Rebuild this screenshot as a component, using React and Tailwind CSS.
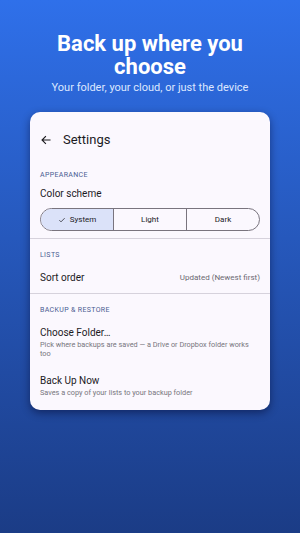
const Label = ({ children, className = "" }) => (
  <div
    className={`px-[10px] text-[7px] leading-[10px] tracking-[0.35px] text-[#4a5c92] ${className}`}
  >
    {children}
  </div>
);

const Divider = ({ className = "" }) => (
  <div className={`h-px bg-[#d6d2dc] ${className}`}></div>
);

const ArrowLeft = () => (
  <svg width="12" height="12" viewBox="0 0 24 24" fill="none">
    <path
      d="M20 12H5M11 5l-7 7 7 7"
      stroke="#1c1b1f"
      strokeWidth="2.2"
      strokeLinecap="square"
    />
  </svg>
);

const Check = () => (
  <svg width="8" height="8" viewBox="0 0 24 24" fill="none">
    <path d="M4 12.5l5 5L20 6.5" stroke="#1c1b1f" strokeWidth="2.2" />
  </svg>
);

export default function App() {
  const options = ["System", "Light", "Dark"];

  return (
    <div
      className="w-[300px] h-[533px] flex flex-col items-center bg-gradient-to-b from-[#2f70ea] to-[#1b3c86] overflow-hidden"
      style={{ fontFamily: "Roboto, 'Noto Sans', sans-serif" }}
    >
      <h1 className="mt-[32px] text-center text-white font-bold text-[22px] leading-[23px] w-[230px]">
        Back up where you choose
      </h1>
      <p className="mt-[3px] text-[11px] leading-[14px] text-[#dde7ff]">
        Your folder, your cloud, or just the device
      </p>

      <div className="mt-[17px] w-[240px] bg-[#fbf8fe] rounded-[10px] shadow-[0_3px_8px_rgba(0,0,30,0.45)] pb-[13px] text-[#1c1b1f]">
        <div className="h-[56px] flex items-center px-[10px] gap-[11px]">
          <ArrowLeft />
          <span className="text-[13px]">Settings</span>
        </div>

        <Label className="mt-[2px]">APPEARANCE</Label>
        <div className="mt-[7px] px-[10px] text-[10px] leading-[14px]">
          Color scheme
        </div>
        <div className="mt-[7px] mx-[10px] h-[23px] flex rounded-full border border-[#79747e] overflow-hidden">
          {options.map((o, i) => (
            <div
              key={o}
              className={`flex-1 flex items-center justify-center gap-[4px] text-[8px] text-[#1c1b1f] ${
                i > 0 ? "border-l border-[#79747e]" : ""
              } ${i === 0 ? "bg-[#dbe2f9]" : ""}`}
            >
              {i === 0 && <Check />}
              {o}
            </div>
          ))}
        </div>
        <Divider className="mt-[7px]" />

        <Label className="mt-[11px]">LISTS</Label>
        <div className="mt-[11px] px-[10px] flex items-center justify-between leading-[14px]">
          <span className="text-[10px]">Sort order</span>
          <span className="text-[8px] text-[#6b6a72]">Updated (Newest first)</span>
        </div>
        <Divider className="mt-[8px]" />

        <Label className="mt-[11px]">BACKUP &amp; RESTORE</Label>
        <div className="mt-[11px] px-[10px]">
          <div className="text-[10px] leading-[14px]">Choose Folder…</div>
          <div className="text-[7.3px] leading-[9px] text-[#77767d] pr-[4px]">
            Pick where backups are saved — a Drive or Dropbox folder works too
          </div>
        </div>
        <div className="mt-[16px] px-[10px]">
          <div className="text-[10px] leading-[14px]">Back Up Now</div>
          <div className="text-[7.3px] leading-[9px] text-[#77767d]">
            Saves a copy of your lists to your backup folder
          </div>
        </div>
      </div>
    </div>
  );
}
